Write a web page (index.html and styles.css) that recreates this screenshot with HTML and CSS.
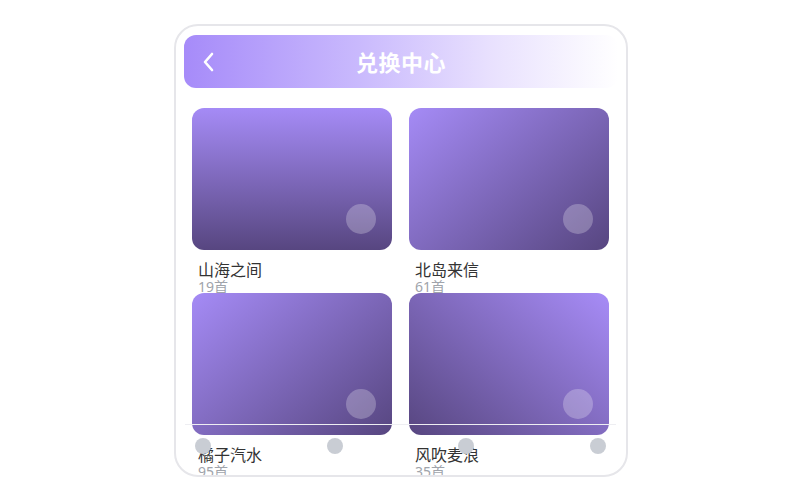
FILE: index.html
```html
<!DOCTYPE html>
<html lang="zh">
<head>
<meta charset="utf-8">
<title>兑换中心</title>
<link rel="stylesheet" href="styles.css">
</head>
<body>
<div class="phone">
  <header class="topbar">
    <span class="back">
      <svg width="14" height="20" viewBox="0 0 14 20"><path d="M10 2 L3 10 L10 18" fill="none" stroke="#fff" stroke-width="2.6" stroke-linecap="round" stroke-linejoin="round"/></svg>
    </span>
    <h1 class="title">兑换中心</h1>
  </header>
  <main class="grid">
    <div class="item">
      <div class="cover g-down"><span class="play"></span></div>
      <div class="name">山海之间</div>
      <div class="count">19首</div>
    </div>
    <div class="item">
      <div class="cover g-diag"><span class="play"></span></div>
      <div class="name">北岛来信</div>
      <div class="count">61首</div>
    </div>
    <div class="item">
      <div class="cover g-diag"><span class="play"></span></div>
      <div class="name">橘子汽水</div>
      <div class="count">95首</div>
    </div>
    <div class="item">
      <div class="cover g-rdiag"><span class="play"></span></div>
      <div class="name">风吹麦浪</div>
      <div class="count">35首</div>
    </div>
  </main>
  <nav class="tabbar">
    <span class="dot"></span>
    <span class="dot"></span>
    <span class="dot"></span>
    <span class="dot"></span>
  </nav>
</div>
</body>
</html>
```

FILE: styles.css
```css
html, body {
  margin: 0;
  padding: 0;
  background: #ffffff;
}
body {
  height: 500px;
  box-sizing: border-box;
  padding-left: 2px;
  display: flex;
  align-items: center;
  justify-content: center;
  font-family: "Noto Sans", "Noto Sans CJK SC", sans-serif;
}
.phone {
  position: relative;
  box-sizing: border-box;
  width: 454px;
  height: 453px;
  border: 2px solid #e6e6ea;
  border-radius: 24px;
  overflow: hidden;
  background: #fff;
  padding: 9px 8px 0 8px;
}
.topbar {
  position: relative;
  height: 53px;
  border-radius: 12px;
  background: linear-gradient(90deg, #a68bf9 0%, #c9b9fd 40%, #e8e0fe 70%, #ffffff 100%);
  display: flex;
  align-items: center;
  justify-content: center;
}
.back {
  position: absolute;
  left: 18px;
  top: 17px;
  display: flex;
}
.title {
  margin: 0;
  font-size: 22px;
  font-weight: 700;
  color: #fff;
  letter-spacing: 0.5px;
  font-family: "Noto Sans CJK SC", sans-serif;
}
.grid {
  display: grid;
  grid-template-columns: 200px 200px;
  column-gap: 17px;
  row-gap: 0;
  padding: 20px 0 0 8px;
}
.item {
  display: flex;
  flex-direction: column;
}
.cover {
  position: relative;
  height: 142px;
  border-radius: 12px;
}
.g-down { background: linear-gradient(180deg, #a58bf6 0%, #574680 100%); }
.g-diag { background: linear-gradient(140deg, #a58bf6 0%, #574680 100%); }
.g-rdiag { background: linear-gradient(220deg, #a78cf7 0%, #574680 100%); }
.play {
  position: absolute;
  right: 16px;
  bottom: 16px;
  width: 30px;
  height: 30px;
  border-radius: 50%;
  background: rgba(255, 255, 255, 0.25);
}
.name {
  margin-top: 10px;
  padding-left: 6px;
  font-size: 16px;
  line-height: 20px;
  color: #333;
}
.count {
  padding-left: 6px;
  font-size: 14px;
  line-height: 13px;
  color: #a0a4ab;
}
.tabbar {
  position: absolute;
  left: 9px;
  right: 10px;
  bottom: 6px;
  height: 45px;
  box-sizing: border-box;
  border-top: 1px solid #eeeef2;
  padding: 13px 10px 0 10px;
  display: flex;
  justify-content: space-between;
  align-items: flex-start;
}
.dot {
  width: 16px;
  height: 16px;
  border-radius: 50%;
  background: #c9cdd4;
}
```
